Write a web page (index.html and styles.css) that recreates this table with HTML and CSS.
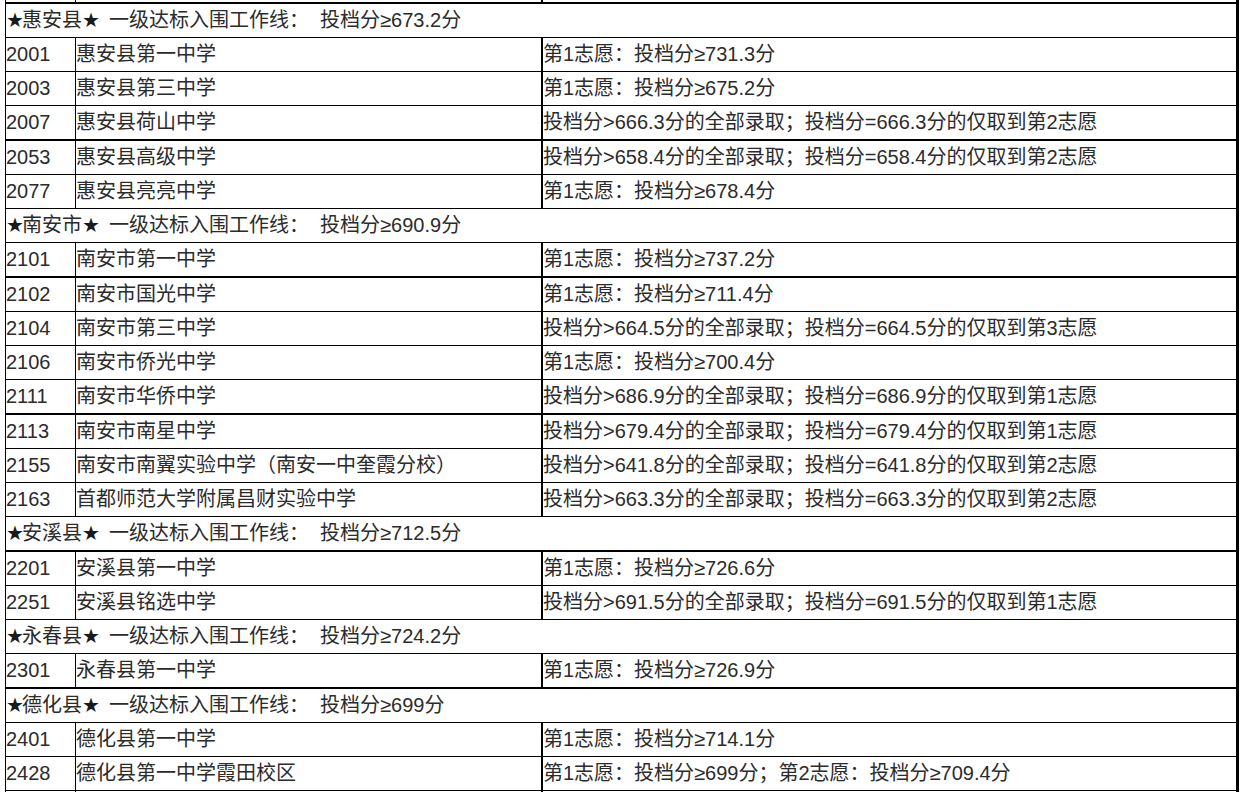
FILE: index.html
```html
<!DOCTYPE html>
<html lang="zh-CN">
<head>
<meta charset="utf-8">
<title>一级达标入围工作线</title>
<link rel="stylesheet" href="styles.css">
</head>
<body>
<table class="score-table">
  <tbody>
    <tr class="spacer thick"><td class="c1"></td><td class="c2"></td><td class="c3"></td></tr>
    <tr class="region"><td colspan="3"><span class="star">★</span>惠安县<span class="star">★</span>&nbsp; 一级达标入围工作线：&nbsp; 投档分≥673.2分</td></tr>
    <tr><td class="c1">2001</td><td class="c2">惠安县第一中学</td><td class="c3">第1志愿：投档分≥731.3分</td></tr>
    <tr><td class="c1">2003</td><td class="c2">惠安县第三中学</td><td class="c3">第1志愿：投档分≥675.2分</td></tr>
    <tr class="thick"><td class="c1">2007</td><td class="c2">惠安县荷山中学</td><td class="c3">投档分&gt;666.3分的全部录取；投档分=666.3分的仅取到第2志愿</td></tr>
    <tr><td class="c1">2053</td><td class="c2">惠安县高级中学</td><td class="c3">投档分&gt;658.4分的全部录取；投档分=658.4分的仅取到第2志愿</td></tr>
    <tr><td class="c1">2077</td><td class="c2">惠安县亮亮中学</td><td class="c3">第1志愿：投档分≥678.4分</td></tr>
    <tr class="region"><td colspan="3"><span class="star">★</span>南安市<span class="star">★</span>&nbsp; 一级达标入围工作线：&nbsp; 投档分≥690.9分</td></tr>
    <tr class="thick"><td class="c1">2101</td><td class="c2">南安市第一中学</td><td class="c3">第1志愿：投档分≥737.2分</td></tr>
    <tr><td class="c1">2102</td><td class="c2">南安市国光中学</td><td class="c3">第1志愿：投档分≥711.4分</td></tr>
    <tr><td class="c1">2104</td><td class="c2">南安市第三中学</td><td class="c3">投档分&gt;664.5分的全部录取；投档分=664.5分的仅取到第3志愿</td></tr>
    <tr><td class="c1">2106</td><td class="c2">南安市侨光中学</td><td class="c3">第1志愿：投档分≥700.4分</td></tr>
    <tr class="thick"><td class="c1">2111</td><td class="c2">南安市华侨中学</td><td class="c3">投档分&gt;686.9分的全部录取；投档分=686.9分的仅取到第1志愿</td></tr>
    <tr><td class="c1">2113</td><td class="c2">南安市南星中学</td><td class="c3">投档分&gt;679.4分的全部录取；投档分=679.4分的仅取到第1志愿</td></tr>
    <tr><td class="c1">2155</td><td class="c2">南安市南翼实验中学（南安一中奎霞分校）</td><td class="c3">投档分&gt;641.8分的全部录取；投档分=641.8分的仅取到第2志愿</td></tr>
    <tr><td class="c1">2163</td><td class="c2">首都师范大学附属昌财实验中学</td><td class="c3">投档分&gt;663.3分的全部录取；投档分=663.3分的仅取到第2志愿</td></tr>
    <tr class="region thick"><td colspan="3"><span class="star">★</span>安溪县<span class="star">★</span>&nbsp; 一级达标入围工作线：&nbsp; 投档分≥712.5分</td></tr>
    <tr><td class="c1">2201</td><td class="c2">安溪县第一中学</td><td class="c3">第1志愿：投档分≥726.6分</td></tr>
    <tr><td class="c1">2251</td><td class="c2">安溪县铭选中学</td><td class="c3">投档分&gt;691.5分的全部录取；投档分=691.5分的仅取到第1志愿</td></tr>
    <tr class="region"><td colspan="3"><span class="star">★</span>永春县<span class="star">★</span>&nbsp; 一级达标入围工作线：&nbsp; 投档分≥724.2分</td></tr>
    <tr class="thick"><td class="c1">2301</td><td class="c2">永春县第一中学</td><td class="c3">第1志愿：投档分≥726.9分</td></tr>
    <tr class="region"><td colspan="3"><span class="star">★</span>德化县<span class="star">★</span>&nbsp; 一级达标入围工作线：&nbsp; 投档分≥699分</td></tr>
    <tr><td class="c1">2401</td><td class="c2">德化县第一中学</td><td class="c3">第1志愿：投档分≥714.1分</td></tr>
    <tr><td class="c1">2428</td><td class="c2">德化县第一中学霞田校区</td><td class="c3">第1志愿：投档分≥699分；第2志愿：投档分≥709.4分</td></tr>
    <tr class="tail"><td class="c1"></td><td class="c2"></td><td class="c3"></td></tr>
  </tbody>
</table>
</body>
</html>
```
FILE: styles.css
```css
html, body {
  margin: 0;
  padding: 0;
  background: #ffffff;
  overflow: hidden;
}

.score-table {
  margin-left: 5px;
  width: 1234px;
  table-layout: fixed;
  border-collapse: separate;
  border-spacing: 0;
  font-family: "Liberation Sans", "Noto Sans CJK SC", sans-serif;
  font-size: 20px;
  color: #2b2b2b;
}

.score-table td {
  box-sizing: border-box;
  padding: 0;
  line-height: 33px;
  white-space: nowrap;
  vertical-align: middle;
  border-bottom: 1px solid #000000;
  text-align: left;
}

.score-table tr.thick td {
  border-bottom-width: 2px;
}

.score-table .c1 {
  width: 71px;
  border-left: 1px solid #000000;
  border-right: 1px solid #000000;
}

.score-table .c2 {
  width: 467px;
  border-right: 2px solid #000000;
}

.score-table .c3 {
  width: 696px;
  border-right: 3px solid #000000;
}

.score-table .region td {
  border-left: 1px solid #000000;
  border-right: 3px solid #000000;
}

.score-table .spacer td {
  height: 4px;
  line-height: 0;
}

.score-table .tail td {
  height: 34px;
}

.star {
  font-family: "DejaVu Sans", sans-serif;
  letter-spacing: -2px;
  color: #1a1a1a;
}
```
